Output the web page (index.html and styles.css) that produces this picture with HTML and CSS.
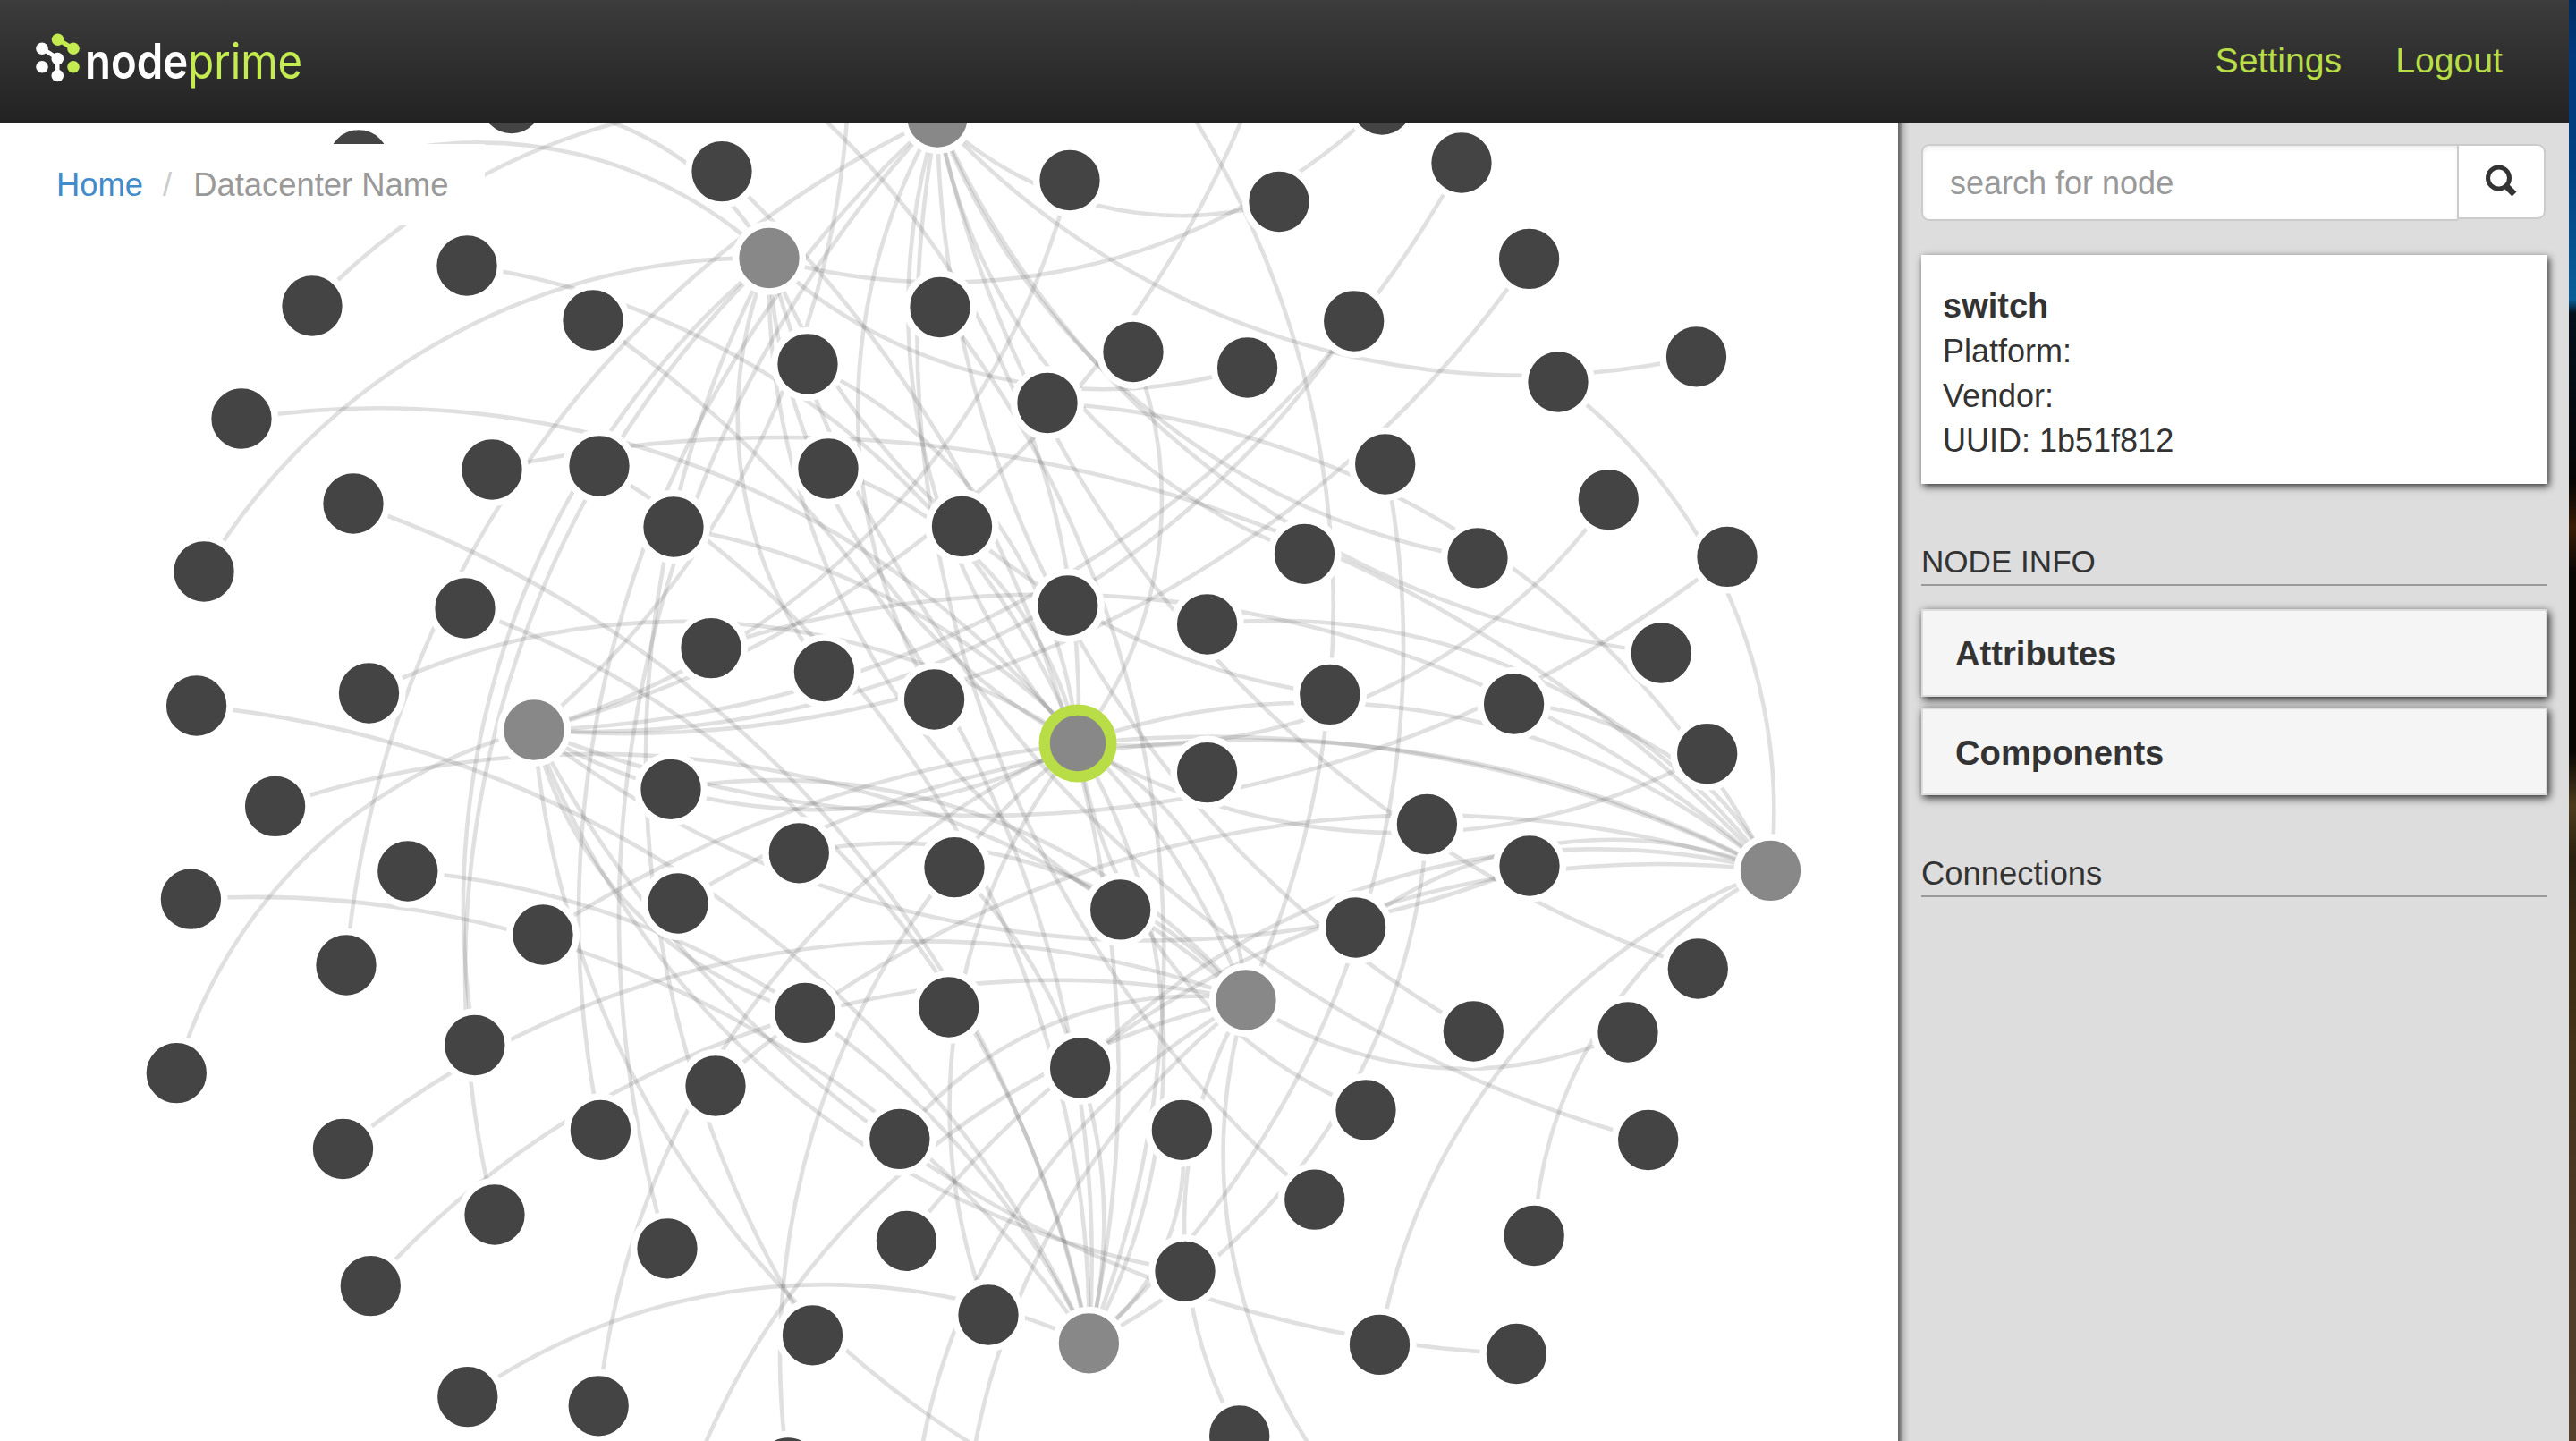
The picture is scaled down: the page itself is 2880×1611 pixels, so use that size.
FILE: index.html
```html
<!DOCTYPE html>
<html lang="en">
<head>
<meta charset="utf-8">
<title>nodeprime</title>
<link rel="stylesheet" href="styles.css">
</head>
<body>
<div class="window">
  <header class="topbar">
    <svg class="logo" width="340" height="90" viewBox="34 30 340 90" role="img" aria-label="nodeprime">
      <g class="logo-white">
        <path d="M47 54 64 65V84.500" />
        <circle cx="47" cy="54.300" r="6.800"/><circle cx="64.300" cy="65.500" r="6.800"/>
        <circle cx="64.300" cy="84.500" r="6.800"/><circle cx="47" cy="74.700" r="6.800"/>
      </g>
      <g class="logo-green">
        <path d="M64.600 44 82 54.300" />
        <circle cx="64.600" cy="44.300" r="6.800"/><circle cx="82" cy="54.300" r="6.800"/><circle cx="82" cy="74.700" r="6.800"/>
      </g>
      <text transform="translate(95 88) scale(.86 1)"><tspan class="logo-node">node</tspan><tspan class="logo-prime">prime</tspan></text>
    </svg>
    <nav class="nav">
      <a>Settings</a>
      <a>Logout</a>
    </nav>
  </header>
  <div class="content">
    <main class="graph">
      <svg class="graph-svg" width="2122" height="1474" viewBox="0 137 2122 1474">
        <g id="links"></g>
        <g id="nodes"></g>
      </svg>
      <div class="breadcrumb">
        <a class="crumb-link">Home</a><span class="crumb-sep">/</span><span class="crumb-current">Datacenter Name</span>
      </div>
    </main>
    <aside class="sidebar">
      <div class="search">
        <div class="search-input">search for node</div>
        <div class="search-button">
          <svg width="38" height="38" viewBox="0 0 38 38"><circle cx="14.500" cy="15" r="12" /><path d="M22.500 23.500 32 33" /></svg>
        </div>
      </div>
      <section class="card">
        <h1>switch</h1>
        <p>Platform:</p>
        <p>Vendor:</p>
        <p>UUID: 1b51f812</p>
      </section>
      <h2 class="section-title info-title">NODE INFO</h2>
      <div class="panels">
        <div class="panel">Attributes</div>
        <div class="panel">Components</div>
      </div>
      <h2 class="section-title">Connections</h2>
    </aside>
  </div>
</div>
<div class="desktop"></div>
<script src="graph.js"></script>
</body>
</html>
```
FILE: styles.css
```css
* { box-sizing: border-box; }
body {
  margin: 0;
  width: 2880px;
  height: 1611px;
  overflow: hidden;
  display: flex;
  background: #fff;
  color: #333;
  font: 36px/50px "Liberation Sans", Arial, sans-serif;
}
.window { width: 2872px; display: flex; flex-direction: column; }
.desktop {
  width: 8px;
  background: linear-gradient(#002c62 0, #00397c 60px, #003f80 180px, #0a5f98 335px, #04101c 350px, #060504 540px, #3a1c05 590px, #080504 640px, #080504 840px, #4c3a1c 900px, #2a2010 960px, #3c2c14 1050px, #4a3620 1300px, #54402c 1611px);
}
.topbar {
  height: 137px;
  display: flex;
  justify-content: space-between;
  align-items: flex-start;
  padding: 30px 74px 0 34px;
  background: linear-gradient(#3c3c3c, #222);
}
.logo { display: block; }
.logo-white { fill: #fff; stroke: #fff; }
.logo-green { fill: #c4ec50; stroke: #c4ec50; }
.logo circle { stroke: none; }
.logo path { fill: none; stroke-width: 5; }
.logo text { font-family: Inter, sans-serif; font-size: 55px; }
.logo-node { fill: #fff; font-weight: 600; }
.logo-prime { fill: #c4ec50; font-weight: 400; }
.nav { display: flex; gap: 60px; padding-top: 13px; color: #b8dd46; font-size: 39.200px; }
.content { flex: 1; display: flex; }
.graph { position: relative; width: 2122px; background: #fff; }
.graph-svg { display: block; }
.link { fill: none; stroke: #666; stroke-opacity: .2; stroke-width: 4.600px; }
.node { fill: #444; stroke: #fff; stroke-width: 7.500px; }
.node.hub { fill: #888; }
.node.selected { stroke: #b8dd46; stroke-width: 12.300px; }
.breadcrumb {
  position: absolute;
  left: 0;
  top: 24px;
  width: 542px;
  height: 90px;
  padding: 21px 0 0 63px;
  background: #fff;
  font-size: 36.400px;
  white-space: nowrap;
}
.crumb-link { color: #428bca; }
.crumb-sep { color: #ccc; padding: 0 24px 0 22px; }
.crumb-current { color: #999; }
.sidebar {
  width: 750px;
  padding: 24px 24px 0 26px;
  background: linear-gradient(90deg, #666 0, #777 2px, #999 4px, #bbb 6px, #ccc 9px, #ddd 13px);
}
.search { display: flex; align-items: flex-start; }
.search-input {
  width: 600px;
  height: 86px;
  padding: 17px 30px;
  background: #fff;
  border: 2px solid #ccc;
  border-right: 0;
  border-radius: 9px 0 0 9px;
  box-shadow: inset 0 3px 4px rgba(0, 0, 0, .075);
  color: #999;
}
.search-button {
  width: 99px;
  height: 84px;
  margin-left: -1px;
  padding: 21px 0 0 30px;
  background: #fff;
  border: 2px solid #ccc;
  border-radius: 0 9px 9px 0;
}
.search-button svg { display: block; fill: none; stroke: #333; stroke-width: 5; }
.search-button path { stroke-width: 7; }
.card {
  height: 256px;
  margin-top: 38px;
  padding: 32px 24px 0 24px;
  background: #fff;
  box-shadow: 2px 3px 8px #333;
}
.card h1 { margin: 0; height: 51px; font-size: 38px; font-weight: 700; line-height: 50px; }
.card p { margin: 0; }
.section-title {
  margin: 62px 0 0;
  height: 52px;
  border-bottom: 2px solid #999;
  font-size: 36.400px;
  line-height: 52px;
  font-weight: 400;
}
.info-title { font-size: 35.100px; line-height: 50px; }
.panels { display: flex; flex-direction: column; gap: 12px; margin-top: 26px; }
.panel {
  height: 98px;
  padding: 23px 36px;
  background: #f5f5f5;
  border: 2px solid #ddd;
  box-shadow: 2px 3px 9px #222;
  font-size: 38.200px;
  font-weight: 700;
}
.panel + .panel { padding-top: 24px; }
```
FILE: graph.js
```js
// Switches, keyed by a one-letter id.
const hubs = {
  T: [1048, 131], G: [860, 288.5], L: [597, 816], S: [1205, 831],
  R: [1979.5, 973.4], P: [1393, 1118], B: [1217.4, 1501.8]
};

// Machines: x, y, id of the switch each one is plugged into.
const leaves = [
  [401, 179, "G"], [572, 115.5, "G"], [522, 297, "S"], [349, 342, "T"], [663, 358, "B"],
  [270, 468, "S"], [550, 525, "R"], [670, 521, "B"], [395, 563, "B"], [753, 589, "P"],
  [228, 639, "G"], [520, 680, "B"], [412.5, 775, "S"], [219.6, 789, "B"], [807, 191.6, "B"],
  [1196, 201.5, "L"], [1430, 225.5, "T"], [1051, 343.5, "B"], [903, 407, "S"], [1267, 393.5, "S"],
  [1394.6, 411, "G"], [1171, 450.5, "R"], [926, 524, "S"], [1075.5, 588.5, ""], [1193.8, 677, ""],
  [795, 724.6, "R"], [921.4, 750.5, "G"], [1349.6, 698, "R"], [1044.6, 782, "T"],
  [1545, 117, "G"], [1634, 182, "L"], [1709.6, 289.4, "L"], [1513.7, 359, "L"], [1742, 427, "R"],
  [1896.5, 398.8, "T"], [1548.7, 519, "B"], [1798.3, 558.6, "S"], [1458.5, 619.3, "T"],
  [1652, 623.8, "T"], [1931, 622.4, "L"], [1857.3, 730, "T"], [1486.8, 776.4, "G"],
  [1692.6, 787, "R"], [1908.7, 842.7, "S"], [307.6, 901.4, "P"], [750, 882.3, "P"],
  [213.4, 1005.2, "B"], [455.8, 974, "B"], [607, 1045, "R"], [758, 1010, "R"], [387, 1079, "T"],
  [530.8, 1168.5, "G"], [197.3, 1199.7, "L"], [800, 1214, "R"], [383.5, 1284.5, "P"],
  [671.4, 1263.3, "T"], [553, 1358, "G"], [746, 1395.8, "T"], [414.3, 1437.7, "P"],
  [522.8, 1561.7, "B"], [669.2, 1571.8, "S"], [1349.6, 863.7, ""], [893.3, 953.8, "P"],
  [1067, 969.7, "B"], [1252.7, 1016.9, "G"], [900, 1132.4, "L"], [1060.7, 1126, ""],
  [1207.6, 1193.9, "R"], [1005.8, 1273.4, "P"], [1321.4, 1263.3, "B"], [1013.4, 1387.3, "R"],
  [1325, 1421.3, "L"], [1105, 1470, "S"], [908.5, 1492.8, "G"], [1385.7, 1605, "P"],
  [881, 1641, "S"], [1595.4, 921.5, "B"], [1710, 968, "L"], [1515.6, 1037, "R"],
  [1898.3, 1083, "T"], [1647.3, 1153, "T"], [1820, 1154, "P"], [1527, 1241, "S"],
  [1842.7, 1274.5, "G"], [1469.8, 1341.2, "T"], [1715.2, 1381.5, "R"], [1542.5, 1503.4, "R"],
  [1695.4, 1513.5, "L"],
  [1195, 1673, "L"], [935, -104, "L"], [1304, 85, "P"], [1530, 1700, "P"], [761, 1687, "P"],
  [1020, 1722, "P"], [1084, 1882, "P"], [1435, 0, "L"], [791, 32, "S"]
];

const uplinks = ["T", "G", "L", "R", "P", "B"];

const add = (parent, tag, attrs) => {
  const el = document.createElementNS("http://www.w3.org/2000/svg", tag);
  for (const key in attrs) el.setAttribute(key, attrs[key]);
  document.getElementById(parent).appendChild(el);
};

// Each link is an arc whose radius equals the distance between its ends.
const link = (a, b) => {
  const r = Math.hypot(b[0] - a[0], b[1] - a[1]);
  add("links", "path", { class: "link", d: `M${a[0]},${a[1]}A${r},${r} 0 0,1 ${b[0]},${b[1]}` });
};

leaves.forEach(n => { if (n[2]) link(n, hubs[n[2]]); });
uplinks.forEach(id => link(hubs.S, hubs[id]));

leaves.forEach(n => add("nodes", "circle", { class: "node", cx: n[0], cy: n[1], r: 37.4 }));
Object.keys(hubs).forEach(id => add("nodes", "circle", {
  class: "node hub" + (id === "S" ? " selected" : ""), cx: hubs[id][0], cy: hubs[id][1], r: 37.4
}));
```
